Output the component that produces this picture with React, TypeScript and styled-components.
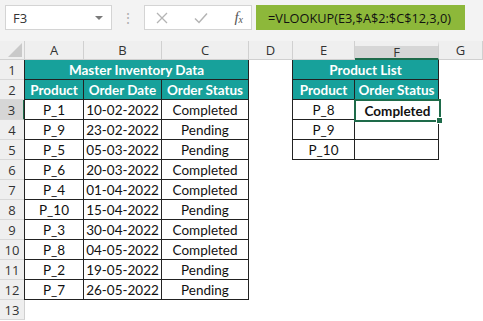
import React from 'react';
import styled, { createGlobalStyle, css } from 'styled-components';

const TEAL = '#17a19b';
const SEL = '#1e6b4a';

const GlobalStyle = createGlobalStyle`
  html, body {
    margin: 0;
    padding: 0;
    background: #ffffff;
  }
  body {
    font-family: Lato, 'Open Sans', sans-serif;
    overflow: hidden;
  }
`;

const inventory = [
  ['P_1', '10-02-2022', 'Completed'],
  ['P_9', '23-02-2022', 'Pending'],
  ['P_5', '05-03-2022', 'Pending'],
  ['P_6', '20-03-2022', 'Completed'],
  ['P_4', '01-04-2022', 'Completed'],
  ['P_10', '15-04-2022', 'Pending'],
  ['P_3', '30-04-2022', 'Completed'],
  ['P_8', '04-05-2022', 'Completed'],
  ['P_2', '19-05-2022', 'Pending'],
  ['P_7', '26-05-2022', 'Pending'],
];

const lookups = ['P_8', 'P_9', 'P_10'];
const letters = ['A', 'B', 'C', 'D', 'E', 'F', 'G'];

export default function App() {
  return (
    <Page>
      <GlobalStyle />
      <Toolbar>
        <NameBox>
          <span>F3</span>
          <Caret />
        </NameBox>
        <Grip>⋮</Grip>
        <FxBox>
          <svg width="12" height="12" viewBox="0 0 12 12">
            <path d="M1 1 L11 11 M11 1 L1 11" stroke="#b4b4b4" strokeWidth="1.3" fill="none" />
          </svg>
          <svg width="14" height="12" viewBox="0 0 14 12">
            <path d="M1 6.5 L5 10.5 L13 1.5" stroke="#b4b4b4" strokeWidth="1.5" fill="none" />
          </svg>
          <FxLabel>
            f<sub>x</sub>
          </FxLabel>
        </FxBox>
        <Formula>=VLOOKUP(E3,$A$2:$C$12,3,0)</Formula>
      </Toolbar>

      <Sheet>
        <Corner>
          <svg width="16" height="16" viewBox="0 0 16 16">
            <path d="M16 2 L16 16 L2 16 Z" fill="#c9c9c9" />
          </svg>
        </Corner>
        {letters.map((l) => (
          <ColHead key={l} $active={l === 'F'}>
            {l}
          </ColHead>
        ))}

        {/* row 1 */}
        <RowHead>1</RowHead>
        <Cell $span={3} $head $boxed $left $top>
          Master Inventory Data
        </Cell>
        <Cell />
        <Cell $span={2} $head $boxed $left $top>
          Product List
        </Cell>
        <Cell />

        {/* row 2 */}
        <RowHead>2</RowHead>
        <Cell $head $boxed $left>Product</Cell>
        <Cell $head $boxed>Order Date</Cell>
        <Cell $head $boxed>Order Status</Cell>
        <Cell />
        <Cell $head $boxed $left>Product</Cell>
        <Cell $head $boxed>Order Status</Cell>
        <Cell />

        {inventory.map((row, i) => {
          const n = i + 3;
          const lookup = lookups[i];
          const hasLookup = lookup !== undefined;
          return (
            <React.Fragment key={n}>
              <RowHead $active={n === 3}>{n}</RowHead>
              {row.map((v, j) => (
                <Cell key={v} $boxed $left={j === 0}>
                  {v}
                </Cell>
              ))}
              <Cell />
              <Cell $boxed={hasLookup} $left={hasLookup}>
                {lookup}
              </Cell>
              <Cell $boxed={hasLookup} $selected={n === 3}>
                {n === 3 ? 'Completed' : ''}
                {n === 3 && <FillHandle />}
              </Cell>
              <Cell />
            </React.Fragment>
          );
        })}

        <RowHead>13</RowHead>
        {letters.map((l) => (
          <Cell key={l} />
        ))}
      </Sheet>
    </Page>
  );
}

const Page = styled.div`
  width: 483px;
  height: 321px;
  overflow: hidden;
  background: #ffffff;
`;

const Toolbar = styled.div`
  display: flex;
  align-items: stretch;
  height: 41px;
  box-sizing: border-box;
  padding: 5px 0 11px 5px;
  background: #f3f3f3;
`;

const NameBox = styled.div`
  width: 107px;
  box-sizing: border-box;
  display: flex;
  align-items: center;
  justify-content: space-between;
  padding: 0 8px 0 7px;
  background: #ffffff;
  border: 1px solid #d4d4d4;
  font-family: 'Open Sans', sans-serif;
  font-size: 13px;
  color: #333333;
`;

const Caret = styled.span`
  width: 0;
  height: 0;
  border-left: 4px solid transparent;
  border-right: 4px solid transparent;
  border-top: 4px solid #7a7a7a;
`;

const Grip = styled.div`
  width: 32px;
  display: flex;
  align-items: center;
  justify-content: center;
  color: #b0b0b0;
  font-size: 14px;
`;

const FxBox = styled.div`
  width: 108px;
  box-sizing: border-box;
  display: flex;
  align-items: center;
  justify-content: space-between;
  padding: 0 8px 0 11px;
  background: #ffffff;
  border: 1px solid #d4d4d4;
`;

const FxLabel = styled.span`
  font-family: 'Liberation Serif', serif;
  font-style: italic;
  font-size: 15px;
  color: #555555;
  sub {
    font-size: 10px;
    vertical-align: -1px;
  }
`;

const Formula = styled.div`
  margin-left: 4px;
  width: 209px;
  display: flex;
  align-items: center;
  padding-left: 12px;
  box-sizing: border-box;
  background: #8db83a;
  font-family: 'Open Sans', sans-serif;
  font-size: 12.75px;
  color: #111111;
  white-space: nowrap;
`;

const Sheet = styled.div`
  display: grid;
  grid-template-columns: 25px 59px 78px 87px 44px 62px 84px 1fr;
  grid-template-rows: 19px repeat(13, 20px);
`;

const headBase = css`
  display: flex;
  align-items: center;
  justify-content: center;
  box-sizing: border-box;
  background: #efefef;
  font-family: 'Open Sans', sans-serif;
  font-size: 13px;
  color: #333333;
`;

const Corner = styled.div`
  ${headBase};
  align-items: flex-end;
  justify-content: flex-end;
  padding: 0 2px 2px 0;
  border-right: 1px solid #d0d0d0;
  border-bottom: 1px solid #d0d0d0;
`;

const ColHead = styled.div<{ $active?: boolean }>`
  ${headBase};
  border-right: 1px solid #d0d0d0;
  border-bottom: ${({ $active }) => ($active ? `2px solid ${SEL}` : '1px solid #d0d0d0')};
  background: ${({ $active }) => ($active ? '#d6d6d6' : '#efefef')};
  ${({ $active }) => $active && 'border-top: 5px solid #efefef;'}
`;

const RowHead = styled.div<{ $active?: boolean }>`
  ${headBase};
  border-bottom: 1px solid #d8d8d8;
  border-right: ${({ $active }) => ($active ? `2px solid ${SEL}` : '1px solid #d0d0d0')};
  background: ${({ $active }) => ($active ? '#d6d6d6' : '#efefef')};
`;

type CellProps = {
  $span?: number;
  $head?: boolean;
  $boxed?: boolean;
  $left?: boolean;
  $top?: boolean;
  $selected?: boolean;
};

const Cell = styled.div<CellProps>`
  position: relative;
  display: flex;
  align-items: center;
  justify-content: center;
  box-sizing: border-box;
  padding-top: 1px;
  font-size: 13.5px;
  color: #111111;
  white-space: nowrap;
  ${({ $span }) => $span && `grid-column: span ${$span};`}
  ${({ $boxed }) => $boxed && 'border-right: 1px solid #222222; border-bottom: 1px solid #222222;'}
  ${({ $boxed, $left }) => $boxed && $left && 'border-left: 1px solid #222222; margin-left: -1px;'}
  ${({ $head }) => $head && `background: ${TEAL}; color: #ffffff; font-weight: 700;`}
  ${({ $selected }) =>
    $selected &&
    `font-weight: 700; border: 2px solid ${SEL}; margin: -1px -2px -2px -1px; z-index: 2;`}
`;

const FillHandle = styled.span`
  position: absolute;
  right: -4px;
  bottom: -4px;
  width: 5px;
  height: 5px;
  background: ${SEL};
  border: 1px solid #ffffff;
`;
